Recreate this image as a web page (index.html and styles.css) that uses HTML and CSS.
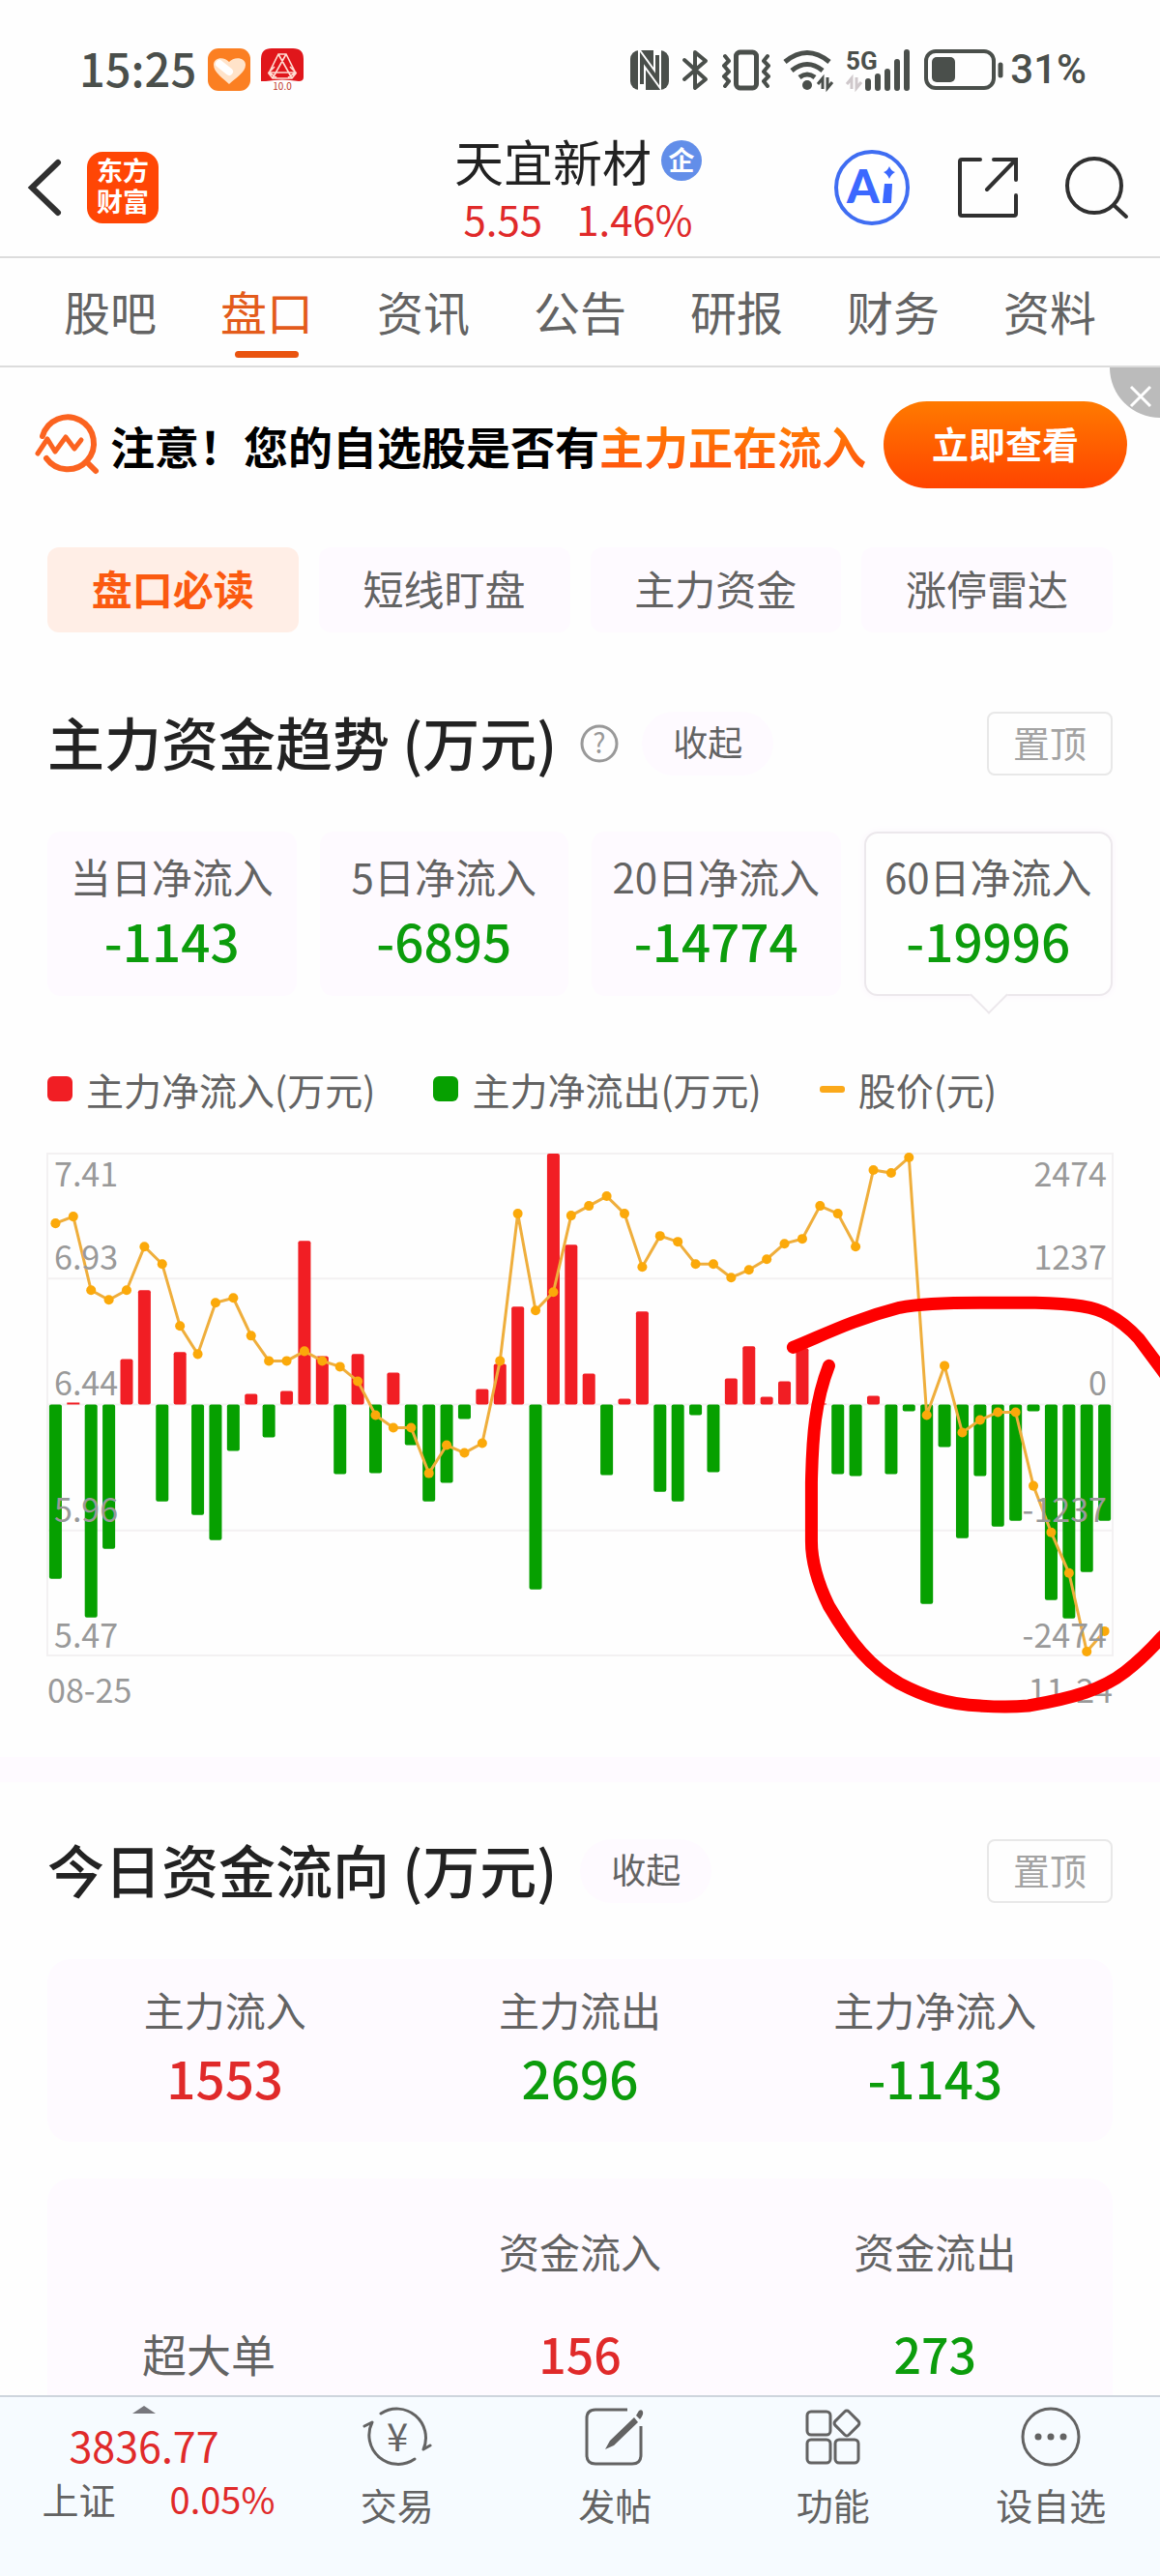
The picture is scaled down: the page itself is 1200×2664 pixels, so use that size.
FILE: index.html
```
<!DOCTYPE html>
<html lang="zh-CN">
<head>
    <meta charset="UTF-8">
    <meta name="viewport" content="width=device-width, initial-scale=1.0">
    <title>天宜新材 - 盘口</title>
    <link rel="stylesheet" href="styles.css">
</head>
<body>
    <!-- Status bar -->
    <div class="statusbar">
        <span class="time">15:25</span>
        <svg class="app-icon" width="44" height="44" viewBox="0 0 44 44">
            <rect width="44" height="44" rx="11" fill="#fb7f22"/>
            <path d="M22 37C16 31 6 25 6 17c0-8 11-9 16-3 5-6 17-5 17 3 0 8-11 14-17 20z" fill="#ffe3c9"/>
            <path d="M12 16l10 8" stroke="#fff" stroke-width="8" stroke-linecap="round"/>
        </svg>
        <svg class="app-icon" width="44" height="44" viewBox="0 0 44 44">
            <path d="M0 34V11Q0 0 11 0h22q11 0 11 11v19q0 4-5 4-17-3-34 0-5 0-5 0z" fill="#e0161b"/>
            <path d="M18 6h8l10 20-4 5H12l-4-5zM18 6l14 25M26 6L12 31M8 25h28M14 19l-6 6 8 5M30 19l6 6-8 5" fill="none" stroke="#ffdcd2" stroke-width="1.6"/>
            <text x="22" y="43" class="tiny">10.0</text>
        </svg>
        <div class="status-right">
            <svg width="41" height="42" viewBox="0 0 41 42">
                <rect y="1" width="40" height="41" rx="9" fill="#4a4f4b"/>
                <path d="M12 42V9l16 22V0" fill="none" stroke="#fff" stroke-width="8"/>
                <path d="M12 36V9l16 22V6" fill="none" stroke="#4a4f4b" stroke-width="4"/>
            </svg>
            <svg width="28" height="42" viewBox="0 0 28 42">
                <path d="M2 11l22 20-11 9V3l11 9L2 31" fill="none" stroke="#4a4f4b" stroke-width="4" stroke-linejoin="round" stroke-linecap="round"/>
            </svg>
            <svg width="50" height="42" viewBox="0 0 50 42">
                <rect x="14.500" y="3" width="21" height="37" rx="4" fill="none" stroke="#4a4f4b" stroke-width="5"/>
                <path d="M3 7l4 5-5 5 5 6-5 5 5 5-4 5M47 7l-4 5 5 5-5 6 5 5-5 5 4 5" fill="none" stroke="#4a4f4b" stroke-width="4" stroke-linejoin="round" stroke-linecap="round"/>
            </svg>
            <svg width="52" height="42" viewBox="0 0 52 42">
                <path d="M2 13Q25-6 48 13M9 22q16-13 32 0M17 29q8-6 16 0" fill="none" stroke="#4a4f4b" stroke-width="5"/>
                <circle cx="25" cy="37" r="5" fill="#4a4f4b"/>
                <path d="M36 36l5-6v11M46 29v11l5-6" fill="none" stroke="#4a4f4b" stroke-width="3"/>
            </svg>
            <svg width="68" height="42" viewBox="0 0 68 42">
                <text x="0" y="21" class="net">5G</text>
                <path d="M1 36l5-6v11M11 29v11l5-6" fill="none" stroke="#cfc8cb" stroke-width="3"/>
                <path d="M23 33v7M33 28v12M43 23v17M53 13v27M63 3v37" stroke="#4a4f4b" stroke-width="6" stroke-linecap="round"/>
            </svg>
            <svg width="84" height="42" viewBox="0 0 84 42">
                <rect x="2" y="2" width="70" height="38" rx="10" fill="none" stroke="#4a4f4b" stroke-width="4"/>
                <rect x="8" y="8" width="24" height="26" rx="5" fill="#4a4f4b"/>
                <path d="M79 16v11" stroke="#4a4f4b" stroke-width="5" stroke-linecap="round"/>
            </svg>
            <span class="percent">31%</span>
        </div>
    </div>

    <!-- Stock header -->
    <header class="header">
        <div class="header-side">
            <button class="icon-btn back" aria-label="返回">
                <svg width="36" height="60" viewBox="0 0 36 60">
                    <path d="M32 4L5 30l27 26" fill="none" stroke="#303030" stroke-width="6" stroke-linecap="round"/>
                </svg>
            </button>
            <div class="logo">东方<br>财富</div>
        </div>
        <div class="stock">
            <h1>天宜新材<span class="badge">企</span></h1>
            <p class="quote red"><span>5.55</span><span>1.46%</span></p>
        </div>
        <div class="header-side header-actions">
            <button class="icon-btn" aria-label="Ai">
                <svg width="80" height="80" viewBox="0 0 80 80">
                    <circle cx="40" cy="40" r="37" fill="#fff" stroke="#3f6df2" stroke-width="4"/>
                    <text x="14" y="56" class="ai">A</text>
                    <path d="M53 36h8l-1 20h-9z" fill="#3b68ff"/>
                    <path d="M58 18q2 5 6 6-4 2-6 7-2-5-6-7 4-1 6-6z" fill="#3b68ff"/>
                </svg>
            </button>
            <button class="icon-btn" aria-label="分享">
                <svg width="64" height="64" viewBox="0 0 64 64">
                    <path d="M24 3H5q-2 0-2 2v54q0 2 2 2h54q2 0 2-2V40M38 3h23v21M60 4L31 34" fill="none" stroke="#303030" stroke-width="4" stroke-linecap="round"/>
                </svg>
            </button>
            <button class="icon-btn" aria-label="搜索">
                <svg width="66" height="66" viewBox="0 0 66 66">
                    <circle cx="30" cy="31" r="28" fill="none" stroke="#303030" stroke-width="4"/>
                    <path d="M50 51l13 12" stroke="#303030" stroke-width="4" stroke-linecap="round"/>
                </svg>
            </button>
        </div>
    </header>

    <nav class="tabs">
        <a href="#">股吧</a>
        <a href="#" class="active">盘口</a>
        <a href="#">资讯</a>
        <a href="#">公告</a>
        <a href="#">研报</a>
        <a href="#">财务</a>
        <a href="#">资料</a>
    </nav>

    <main class="content">
        <!-- Promo banner -->
        <div class="banner">
            <svg class="banner-icon" width="68" height="64" viewBox="0 0 68 64">
                <g fill="none" stroke="#fb6320" stroke-width="6" stroke-linecap="round" stroke-linejoin="round">
                    <path d="M8 23A27 27 0 1 1 12 46M54 50l9 9"/>
                    <path d="M3 41l10-15 8 13 11-15 9 12 7-9" stroke-width="5"/>
                </g>
            </svg>
            <p class="banner-text">注意！您的自选股是否有<span>主力正在流入</span></p>
            <button class="banner-btn">立即查看</button>
            <button class="close" aria-label="关闭">
                <svg width="24" height="24" viewBox="0 0 24 24">
                    <path d="M2 2l20 20M22 2L2 22" stroke="#fff" stroke-width="3"/>
                </svg>
            </button>
        </div>

        <div class="subtabs">
            <button class="active">盘口必读</button>
            <button>短线盯盘</button>
            <button>主力资金</button>
            <button>涨停雷达</button>
        </div>

        <!-- Main fund trend -->
        <section class="section">
            <div class="section-head">
                <h2>主力资金趋势 (万元)</h2>
                <button class="icon-btn" aria-label="说明">
                    <svg width="40" height="40" viewBox="0 0 40 40">
                        <circle cx="20" cy="20" r="18" fill="none" stroke="#999" stroke-width="3"/>
                        <text x="20" y="30" class="question">?</text>
                    </svg>
                </button>
                <button class="pill">收起</button>
                <button class="pin">置顶</button>
            </div>

            <div class="cards">
                <button class="card">当日净流入<strong>-1143</strong></button>
                <button class="card">5日净流入<strong>-6895</strong></button>
                <button class="card">20日净流入<strong>-14774</strong></button>
                <button class="card selected">60日净流入<strong>-19996</strong></button>
            </div>

            <div class="legend">
                <span><i class="swatch in"></i>主力净流入(万元)</span>
                <span><i class="swatch out"></i>主力净流出(万元)</span>
                <span><i class="swatch price"></i>股价(元)</span>
            </div>

            <svg id="chart" class="chart" viewBox="0 0 1100 580"></svg>
        </section>

        <!-- Today's fund flow -->
        <section class="section flow">
            <div class="section-head">
                <h2>今日资金流向 (万元)</h2>
                <button class="pill">收起</button>
                <button class="pin">置顶</button>
            </div>

            <div class="summary">
                <div>主力流入<strong class="red">1553</strong></div>
                <div>主力流出<strong class="green">2696</strong></div>
                <div>主力净流入<strong class="green">-1143</strong></div>
            </div>

            <table class="orders">
                <thead>
                    <tr><td></td><th>资金流入</th><th>资金流出</th></tr>
                </thead>
                <tbody>
                    <tr><th>超大单</th><td class="red">156</td><td class="green">273</td></tr>
                </tbody>
            </table>
        </section>
    </main>

    <!-- Bottom bar -->
    <nav class="bottombar">
        <a href="#" class="index">
            <i class="arrow-up"></i>
            <span class="index-value red">3836.77</span>
            <span class="index-row">上证<span class="red">0.05%</span></span>
        </a>
        <a href="#">
            <svg width="72" height="64" viewBox="0 0 72 64">
                <g fill="none" stroke="#636363" stroke-width="3" stroke-linecap="round" stroke-linejoin="round">
                    <path d="M19 8A30 30 0 0 1 63 45l7-4M54 55A30 30 0 0 1 10 17l-8 4"/>
                </g>
                <text x="36" y="47" class="yen">¥</text>
            </svg>
            交易
        </a>
        <a href="#">
            <svg width="64" height="64" viewBox="0 0 64 64">
                <path d="M45 4H12q-9 0-9 9v38q0 9 9 9h38q9 0 9-9V21" fill="none" stroke="#636363" stroke-width="3"/>
                <path d="M52 12L27 36l-5 9 9-4 25-24zM54 10l3-5q3-2 4 1t-3 8z" fill="#636363"/>
            </svg>
            发帖
        </a>
        <a href="#">
            <svg width="64" height="64" viewBox="0 0 64 64">
                <g fill="none" stroke="#636363" stroke-width="3">
                    <rect x="5" y="6" width="24" height="24" rx="4"/>
                    <rect x="5" y="35" width="24" height="24" rx="4"/>
                    <rect x="34" y="35" width="24" height="24" rx="4"/>
                    <rect x="36" y="8" width="20" height="20" rx="3" transform="rotate(45 46 18)"/>
                </g>
            </svg>
            功能
        </a>
        <a href="#">
            <svg width="64" height="64" viewBox="0 0 64 64">
                <circle cx="32" cy="32" r="29" fill="none" stroke="#636363" stroke-width="3"/>
                <g fill="#636363"><circle cx="19" cy="32" r="3.500"/><circle cx="32" cy="32" r="3.500"/><circle cx="45" cy="32" r="3.500"/></g>
            </svg>
            设自选
        </a>
    </nav>

    <script src="script.js"></script>
</body>
</html>
```
FILE: styles.css
```
* {
    box-sizing: border-box;
}
body {
    margin: 0;
    height: 100vh;
    display: flex;
    flex-direction: column;
    overflow: hidden;
    background: #fefefe;
    color: #636363;
    font-family: "Noto Sans CJK SC", "Noto Sans", sans-serif;
}
h1, h2, p {
    margin: 0;
}
a {
    color: inherit;
    text-decoration: none;
}
button {
    font-family: inherit;
    color: inherit;
    border: none;
    padding: 0 0 6px;
    cursor: pointer;
}
svg {
    display: block;
    flex: none;
    overflow: visible;
}
.red {
    color: #e02a2a;
}
.green {
    color: #0c9c0c;
}
.icon-btn {
    padding: 0;
    background: none;
}

/* Status bar */
.statusbar {
    flex: none;
    display: flex;
    align-items: center;
    height: 122px;
    padding: 22px 76px 0 82px;
    color: #4a4f4b;
}
.time {
    font-size: 47px;
    line-height: 60px;
    font-weight: 500;
    margin-right: 12px;
    padding-bottom: 4px;
}
.app-icon {
    margin-right: 11px;
}
.tiny {
    font-size: 10px;
    text-anchor: middle;
    fill: #c0392b;
}
.net {
    font-size: 26px;
    font-family: Roboto, sans-serif;
    font-weight: 700;
    fill: #4a4f4b;
}
.status-right {
    display: flex;
    align-items: center;
    gap: 13px;
    margin-left: auto;
}
.percent {
    font-size: 42px;
    line-height: 60px;
    font-family: Roboto, sans-serif;
    font-weight: 500;
    margin-left: -8px;
}

/* Header */
.header {
    flex: none;
    display: flex;
    align-items: center;
    height: 145px;
    padding: 0 32px 0 28px;
    border-bottom: 2px solid #dcdcdc;
}
.header-side {
    flex: 1;
    display: flex;
    align-items: center;
    gap: 26px;
}
.header-actions {
    justify-content: flex-end;
    gap: 48px;
}
.logo {
    width: 74px;
    height: 74px;
    padding-top: 3px;
    border-radius: 16px;
    background: #ff4605;
    color: #fff;
    font-size: 27px;
    line-height: 32px;
    font-weight: 700;
    text-align: center;
}
.stock {
    text-align: center;
    padding-top: 4px;
}
.stock h1 {
    display: flex;
    align-items: center;
    gap: 10px;
    color: #222;
    font-size: 51px;
    line-height: 60px;
    font-weight: 400;
}
.badge {
    width: 42px;
    height: 42px;
    border-radius: 50%;
    background: #628ee9;
    color: #fff;
    font-size: 27px;
    line-height: 40px;
    font-weight: 700;
}
.quote {
    display: flex;
    justify-content: center;
    gap: 35px;
    font-size: 42px;
    line-height: 60px;
}
.ai {
    font-size: 48px;
    font-family: Lato, sans-serif;
    font-weight: 900;
    fill: #3b68ff;
}

/* Tabs */
.tabs {
    flex: none;
    display: flex;
    height: 113px;
    padding: 0 33px;
    border-bottom: 2px solid #dcdcdc;
}
.tabs a {
    position: relative;
    flex: 1;
    text-align: center;
    font-size: 48px;
    line-height: 108px;
}
.tabs .active {
    color: #e35b1b;
}
.tabs .active::after {
    content: "";
    position: absolute;
    left: 50%;
    bottom: 8px;
    width: 66px;
    height: 7px;
    margin-left: -33px;
    border-radius: 4px;
    background: #e9530f;
}

.content {
    flex: 1;
    min-height: 0;
    overflow: hidden;
}

/* Banner */
.banner {
    position: relative;
    display: flex;
    align-items: center;
    height: 160px;
    padding: 0 34px 0 36px;
    overflow: hidden;
}
.banner-icon {
    margin-right: 10px;
}
.banner-text {
    color: #000;
    font-size: 46px;
    line-height: 60px;
    font-weight: 700;
    white-space: nowrap;
}
.banner-text span {
    background: linear-gradient(#ff8a00, #ff4e10);
    -webkit-background-clip: text;
    background-clip: text;
    color: transparent;
}
.banner-btn {
    width: 252px;
    height: 90px;
    margin-left: auto;
    border-radius: 45px;
    background: linear-gradient(#ff7a00, #ff4400);
    color: #fff;
    font-size: 38px;
    font-weight: 700;
}
.close {
    position: absolute;
    top: -52px;
    right: -52px;
    width: 104px;
    height: 104px;
    padding: 60px 0 0 20px;
    border-radius: 50%;
    background: #bbb;
}

/* Sub tabs */
.subtabs {
    display: grid;
    grid-template-columns: repeat(4, 1fr);
    gap: 21px;
    padding: 26px 49px 0;
}
.subtabs button {
    height: 88px;
    border-radius: 12px;
    background: #fefaff;
    font-size: 42px;
}
.subtabs .active {
    background: #ffeee6;
    color: #fb5a10;
    font-weight: 700;
}

/* Sections */
.section {
    padding: 82px 49px 43px;
}
.flow {
    padding: 59px 49px 0;
    border-top: 26px solid #fefaff;
}
.section-head {
    display: flex;
    align-items: center;
    gap: 24px;
    height: 66px;
}
.section-head h2 {
    padding-bottom: 4px;
    color: #222;
    font-size: 59px;
    line-height: 66px;
    font-weight: 500;
}
.pill {
    width: 136px;
    height: 66px;
    border-radius: 33px;
    background: #fefaff;
    font-size: 36px;
}
.pin {
    width: 130px;
    height: 66px;
    margin-left: auto;
    border: 2px solid #e8e8e8;
    border-radius: 8px;
    background: none;
    color: #a3a3a3;
    font-size: 38px;
}
.question {
    font-size: 28px;
    text-anchor: middle;
    fill: #999;
}

/* Inflow cards */
.cards {
    display: grid;
    grid-template-columns: repeat(4, 1fr);
    gap: 24px;
    margin-top: 58px;
}
.card {
    position: relative;
    height: 170px;
    padding-bottom: 12px;
    border: 2px solid transparent;
    border-radius: 14px;
    background: #fefaff;
    font-size: 42px;
    line-height: 66px;
    white-space: nowrap;
}
.card strong {
    display: block;
    color: #0c9c0c;
    font-size: 53px;
    font-weight: 500;
}
.card.selected {
    border-color: #ece8ec;
    background: #fefefe;
    box-shadow: 0 0 8px #fbf5fc;
}
.card.selected::after {
    content: "";
    position: absolute;
    left: 50%;
    bottom: -15px;
    width: 26px;
    height: 26px;
    margin-left: -13px;
    border: solid #ece8ec;
    border-width: 0 2px 2px 0;
    background: #fefefe;
    transform: rotate(45deg);
}

/* Chart */
.legend {
    display: flex;
    gap: 60px;
    margin-top: 68px;
    font-size: 39px;
    line-height: 56px;
}
.legend span {
    display: flex;
    align-items: center;
    gap: 14px;
}
.swatch {
    width: 26px;
    height: 26px;
    border-radius: 6px;
}
.in {
    background: #f11e24;
}
.out {
    background: #06a000;
}
.price {
    height: 7px;
    border-radius: 3px;
    background: #fba91a;
}
.chart {
    width: 100%;
    margin-top: 39px;
}
.chart text {
    font-size: 34px;
    fill: #999;
}
.chart .end {
    text-anchor: end;
}
.grid {
    fill: none;
    stroke: #f3f1f2;
    stroke-width: 2;
}
.bar-in {
    fill: #f11e24;
}
.bar-out {
    fill: #06a000;
}
.line {
    fill: none;
    stroke: #efae3c;
    stroke-width: 3;
}
.dot {
    fill: #fba90a;
}
.mark {
    fill: none;
    stroke: #fe0000;
    stroke-width: 13;
    stroke-linecap: round;
    stroke-linejoin: round;
}

/* Flow summary */
.summary {
    display: grid;
    grid-template-columns: repeat(3, 1fr);
    height: 189px;
    margin-top: 58px;
    padding-top: 17px;
    border-radius: 24px;
    background: #fefaff;
    font-size: 42px;
    line-height: 70px;
    text-align: center;
}
.summary strong {
    display: block;
    font-size: 53px;
    font-weight: 500;
}
.orders {
    width: 100%;
    margin-top: 38px;
    padding-top: 22px;
    border-spacing: 0;
    border-radius: 24px 24px 0 0;
    background: #fefaff;
    table-layout: fixed;
    text-align: center;
}
.orders th, .orders td {
    height: 105px;
    padding: 0;
    font-size: 42px;
    font-weight: 400;
}
.orders tbody th {
    padding-left: 98px;
    font-size: 46px;
    text-align: left;
}
.orders tbody td {
    font-size: 50px;
    font-weight: 500;
}

/* Bottom bar */
.bottombar {
    flex: none;
    display: grid;
    grid-template-columns: 298px repeat(4, 1fr);
    height: 187px;
    border-top: 2px solid #ced5dd;
    background: #f6fbff;
    font-size: 38px;
    line-height: 56px;
}
.bottombar a {
    display: flex;
    flex-direction: column;
    align-items: center;
    gap: 10px;
    padding-top: 9px;
}
.bottombar .index {
    gap: 0;
}
.arrow-up {
    border: solid transparent;
    border-width: 0 12px 8px;
    border-bottom-color: #77777d;
}
.index-value {
    margin-top: 4px;
    font-size: 43px;
}
.index-row {
    display: flex;
    gap: 56px;
    padding-left: 30px;
}
.yen {
    font-size: 40px;
    text-anchor: middle;
    fill: #636363;
}
```
FILE: script.js
```
const chart = document.getElementById('chart');

// Bar heights, positive = inflow, negative = outflow
const bars = [-180, 2, -220, -149, 47, 118, -100, 54, -114, -140, -48, 11, -34, 14, 169,
    50, -72, 52, -71, 33, -42, -100, -81, -15, 16, 42, 101, -191, 259, 165,
    32, -73, 6, 96, -90, -100, -11, -70, 27, 60, 8, 24, 58, 1, -72,
    -74, 9, -72, -7, -206, -44, -138, -74, -126, -120, -7, -202, -221, -173, -120];

// Price line, measured down from the top of the grid
const prices = [72, 65, 141, 151, 141, 96, 114, 178, 207, 154, 149, 188, 214, 214, 204,
    214, 220, 235, 270, 283, 283, 330, 301, 309, 299, 214, 62, 162, 143, 64,
    54, 44, 62, 117, 85, 91, 114, 114, 128, 120, 109, 93, 88, 54, 62,
    96, 17, 20, 4, 270, 219, 288, 275, 267, 267, 343, 391, 433, 514, 493];

const leftLabels = ['7.41', '6.93', '6.44', '5.96', '5.47'];
const rightLabels = ['2474', '1237', '0', '-1237', '-2474'];
const labelY = [34, 120, 250, 380, 510];
const zero = 259;
const centerX = i => 8.4 + i * 18.36;

// Grid
let svg = '<path class="grid" d="M0 0H1100V518H0ZM0 129H1100M0 259H1100M0 389H1100"/>';

// Bars
bars.forEach((value, i) => {
    const h = Math.abs(value);
    const y = value > 0 ? zero - h : zero;
    svg += `<rect class="${value > 0 ? 'bar-in' : 'bar-out'}" x="${centerX(i) - 6.5}" y="${y}" width="13" height="${h}" rx="${h > 4 ? 2 : 0}"/>`;
});

// Price line
svg += `<polyline class="line" points="${prices.map((y, i) => centerX(i) + ',' + y).join(' ')}"/>`;
prices.forEach((y, i) => {
    svg += `<circle class="dot" cx="${centerX(i)}" cy="${y}" r="5"/>`;
});

// Axis labels
labelY.forEach((y, i) => {
    svg += `<text x="7" y="${y}">${leftLabels[i]}</text>`;
    svg += `<text class="end" x="1094" y="${y}">${rightLabels[i]}</text>`;
});
svg += '<text x="0" y="567">08-25</text><text class="end" x="1100" y="567">11-24</text>';

// Hand drawn mark round the last days
svg += '<path class="mark" d="M770 200C800 188 830 172 880 159C905 154 940 154 963 154H1020C1060 155 1082 158 1097 167Q1112 175 1127 191L1150 222C1215 310 1215 440 1150 500Q1132 520 1113 535C1090 553 1060 562 1013 570Q990 572 963 570C930 569 905 560 880 547C850 530 830 506 807 467Q789 430 789 400V340C790 290 793 255 807 219"/>';

chart.innerHTML = svg;
```
